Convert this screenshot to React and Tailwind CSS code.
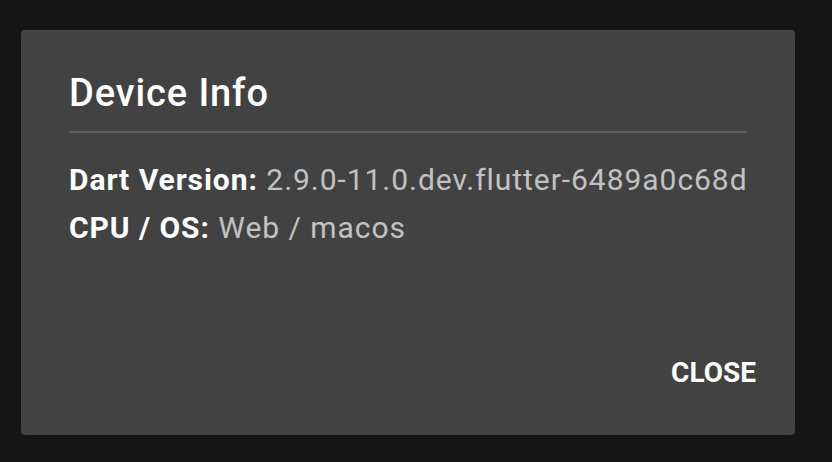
export default function App() {
  return (
    <div className="w-[832px] h-[462px] bg-[#151515] pt-[30px] pl-[21px] font-['Roboto',sans-serif]">
      <div className="w-[774px] h-[405px] bg-[#424242] rounded-[4px] flex flex-col">
        <div className="px-[48px] pt-[41px]">
          <h1 className="text-white text-[38px] leading-[44px] tracking-[0.9px] font-medium">Device Info</h1>
          <div className="mt-[16px] h-[2px] bg-[#5e5e5e]" />
          <div className="mt-[23px] text-[30px] leading-[48px] tracking-[0.95px] whitespace-nowrap">
            <p>
              <span className="text-white font-bold">Dart Version: </span>
              <span className="text-[#c2c2c2]">2.9.0-11.0.dev.flutter-6489a0c68d</span>
            </p>
            <p>
              <span className="text-white font-bold">CPU / OS: </span>
              <span className="text-[#c2c2c2]">Web / macos</span>
            </p>
          </div>
        </div>
        <div className="flex-1" />
        <div className="flex justify-end pr-[39px] pb-[44px]">
          <button className="text-white text-[28px] leading-[36px] font-bold uppercase">Close</button>
        </div>
      </div>
    </div>
  )
}
